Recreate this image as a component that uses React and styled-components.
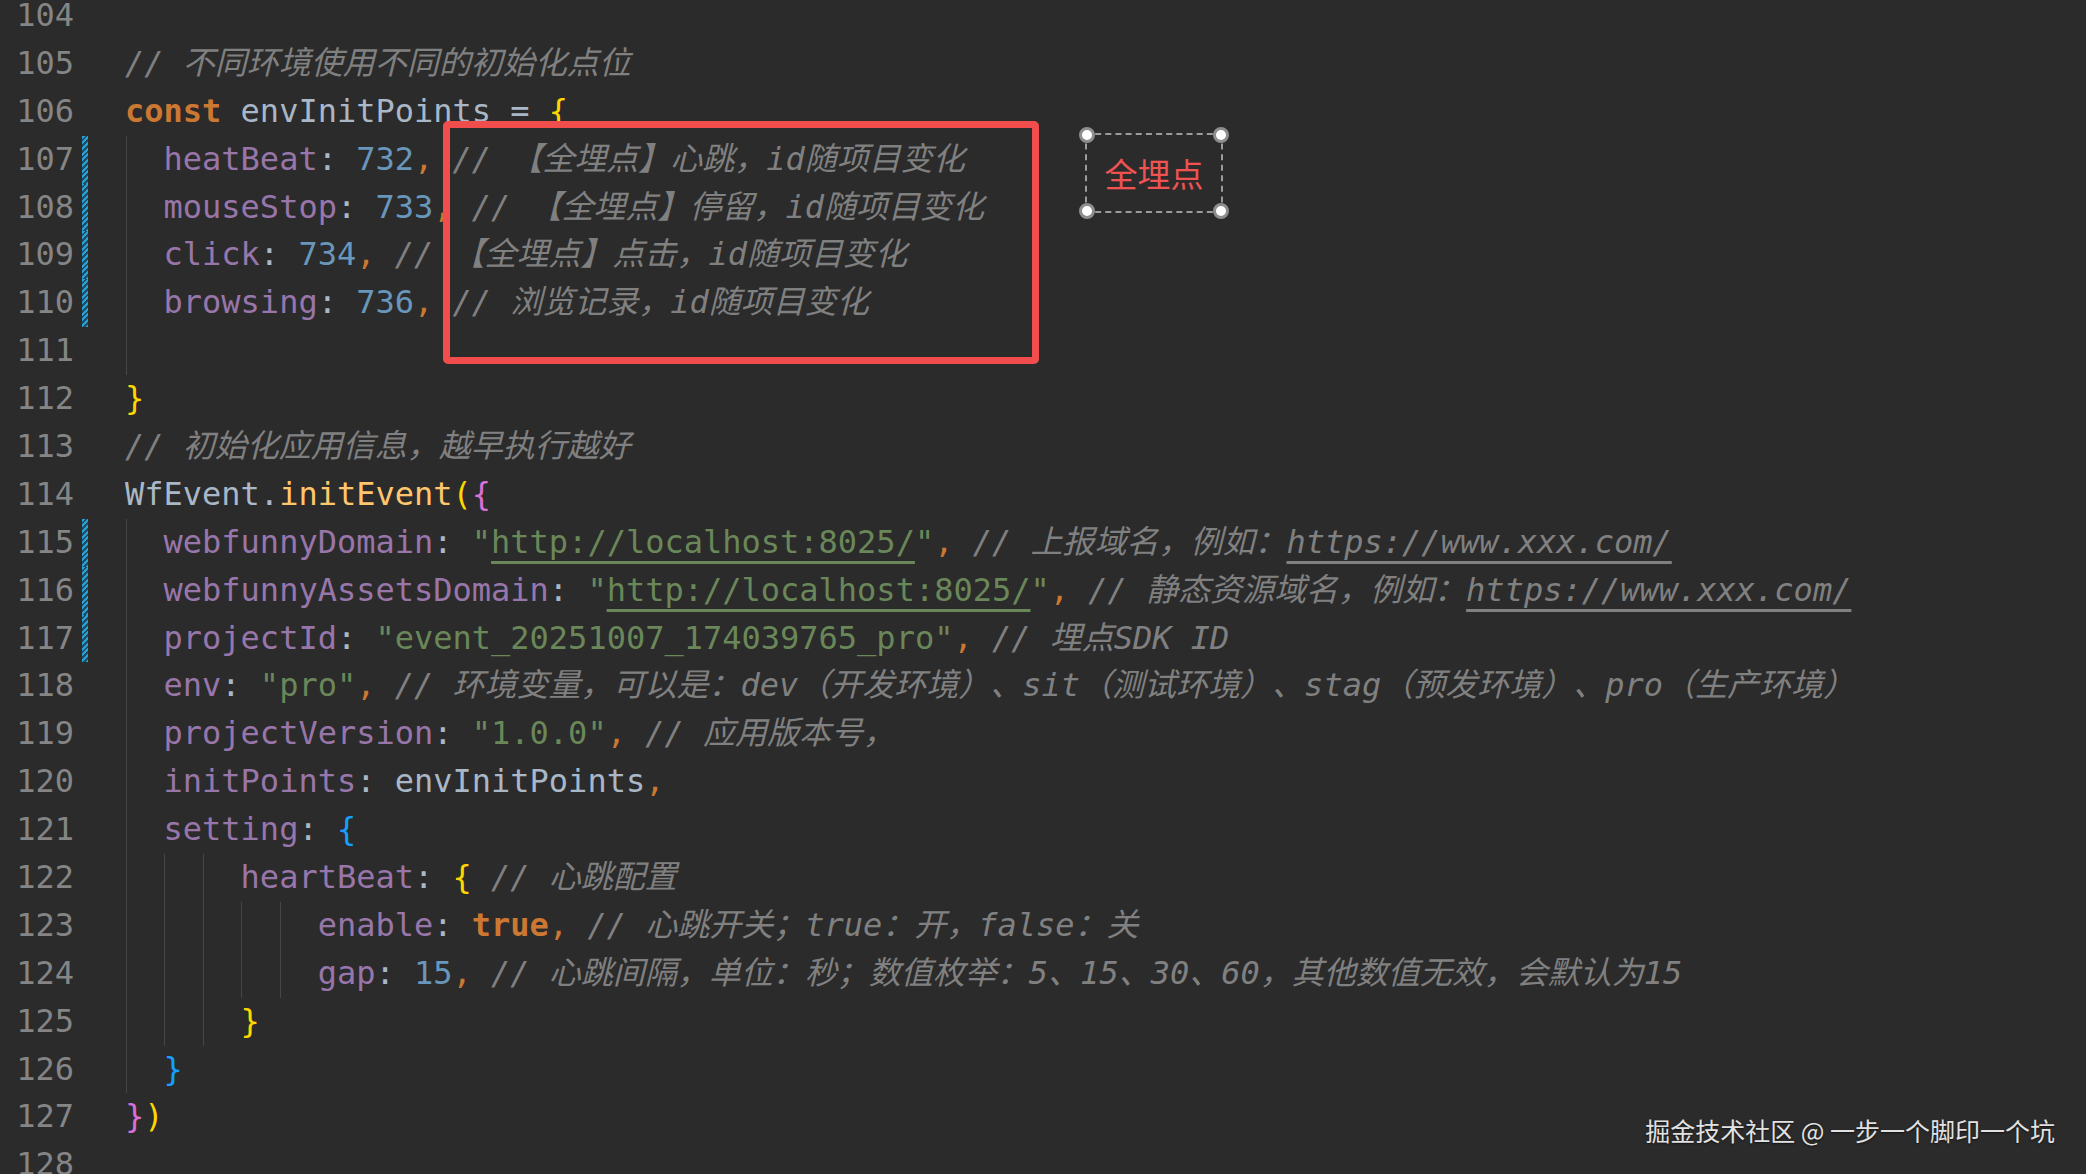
import React from 'react';
import styled, { createGlobalStyle } from 'styled-components';

const CH = 19.2;

const GlobalStyle = createGlobalStyle`
	html, body {
		margin: 0;
		padding: 0;
		background: #2b2b2b;
		overflow: hidden;
	}
`;

const colors = {
	kw: '#cc7832',
	id: '#a9b7c6',
	p: '#a9b7c6',
	prop: '#9876aa',
	num: '#6897bb',
	str: '#6a8759',
	com: '#808080',
	punc: '#cc7832',
	fn: '#ffc66d',
	b1: '#ffd700',
	b2: '#da70d6',
	b3: '#179fff',
};

const Page = styled.div`
	position: relative;
	width: 2086px;
	height: 100vh;
	overflow: hidden;
	font-family: 'DejaVu Sans Mono', 'Noto Sans CJK SC', monospace;
	font-size: 32px;
	text-spacing-trim: space-all;
`;

const Editor = styled.div`
	display: flex;
	flex-direction: column;
	margin-top: -8px;
`;

const Line = styled.div`
	display: flex;
	height: 47.9px;
	line-height: 47.9px;
`;

const LineNo = styled.div`
	width: 74px;
	flex-shrink: 0;
	text-align: right;
	color: #858585;
`;

const ChangeCell = styled.div`
	width: 51px;
	flex-shrink: 0;
	display: flex;
`;

const Marker = styled.span`
	margin-left: 8px;
	width: 6px;
	height: 100%;
	background: ${(p) =>
		p.$on
			? 'repeating-linear-gradient(-45deg, #2a9fd6 0 2px, #1d4d63 2px 4px)'
			: 'transparent'};
`;

const Code = styled.div`
	flex: 1;
	white-space: pre;
	background-image: ${(p) =>
		p.$guides.length
			? p.$guides.map(() => 'linear-gradient(#464646, #464646)').join(', ')
			: 'none'};
	background-position: ${(p) =>
		p.$guides.length ? p.$guides.map((c) => `${c * CH + 1}px 0`).join(', ') : '0 0'};
	background-size: 1px 100%;
	background-repeat: no-repeat;
`;

const Tok = styled.span`
	color: ${(p) => colors[p.$k] || '#a9b7c6'};
	font-weight: ${(p) => (p.$k === 'kw' ? 700 : 400)};
	font-style: ${(p) => (p.$k === 'com' ? 'italic' : 'normal')};
	text-decoration: ${(p) => (p.$u ? 'underline' : 'none')};
	text-decoration-thickness: 3px;
	text-underline-offset: 8px;
`;

// annotations drawn over the code screenshot
const RedBox = styled.div`
	position: absolute;
	left: 443px;
	top: 121px;
	width: 596px;
	height: 243px;
	box-sizing: border-box;
	border: 7px solid #f24d4d;
	border-radius: 5px;
`;

const Tag = styled.div`
	position: absolute;
	left: 1085px;
	top: 133px;
	width: 138px;
	height: 80px;
	box-sizing: border-box;
	border: 2px dashed #9c9c9c;
	display: flex;
	align-items: center;
	justify-content: center;
	font-family: 'Noto Sans CJK SC', sans-serif;
	font-size: 33px;
	color: #f05252;
`;

const Handle = styled.span`
	position: absolute;
	width: 16px;
	height: 16px;
	box-sizing: border-box;
	border-radius: 50%;
	background: #ffffff;
	border: 3px solid #8e8e8e;
	left: ${(p) => (p.$right ? '100%' : '0')};
	top: ${(p) => (p.$bottom ? '100%' : '0')};
	transform: translate(-50%, -50%);
`;

const Watermark = styled.div`
	position: absolute;
	right: 31px;
	bottom: 29px;
	font-family: 'Noto Sans CJK SC', sans-serif;
	font-size: 25px;
	line-height: 30px;
	color: #e2e2e2;
	text-shadow: 0 1px 2px rgba(0, 0, 0, 0.6);
`;

const lines = [
	{ n: 104, t: [] },
	{ n: 105, t: [['com', '// 不同环境使用不同的初始化点位']] },
	{ n: 106, t: [['kw', 'const'], ['id', ' envInitPoints = '], ['b1', '{']] },
	{
		n: 107, mark: true, g: [0],
		t: [['id', '  '], ['prop', 'heatBeat'], ['p', ': '], ['num', '732'], ['punc', ','], ['id', ' '], ['com', '// 【全埋点】心跳，id随项目变化']],
	},
	{
		n: 108, mark: true, g: [0],
		t: [['id', '  '], ['prop', 'mouseStop'], ['p', ': '], ['num', '733'], ['punc', ','], ['id', ' '], ['com', '// 【全埋点】停留，id随项目变化']],
	},
	{
		n: 109, mark: true, g: [0],
		t: [['id', '  '], ['prop', 'click'], ['p', ': '], ['num', '734'], ['punc', ','], ['id', ' '], ['com', '// 【全埋点】点击，id随项目变化']],
	},
	{
		n: 110, mark: true, g: [0],
		t: [['id', '  '], ['prop', 'browsing'], ['p', ': '], ['num', '736'], ['punc', ','], ['id', ' '], ['com', '// 浏览记录，id随项目变化']],
	},
	{ n: 111, g: [0], t: [] },
	{ n: 112, t: [['b1', '}']] },
	{ n: 113, t: [['com', '// 初始化应用信息，越早执行越好']] },
	{ n: 114, t: [['id', 'WfEvent'], ['p', '.'], ['fn', 'initEvent'], ['b1', '('], ['b2', '{']] },
	{
		n: 115, mark: true, g: [0],
		t: [
			['id', '  '], ['prop', 'webfunnyDomain'], ['p', ': '], ['str', '"'], ['str', 'http://localhost:8025/', true], ['str', '"'],
			['punc', ','], ['id', ' '], ['com', '// 上报域名，例如：'], ['com', 'https://www.xxx.com/', true],
		],
	},
	{
		n: 116, mark: true, g: [0],
		t: [
			['id', '  '], ['prop', 'webfunnyAssetsDomain'], ['p', ': '], ['str', '"'], ['str', 'http://localhost:8025/', true], ['str', '"'],
			['punc', ','], ['id', ' '], ['com', '// 静态资源域名，例如：'], ['com', 'https://www.xxx.com/', true],
		],
	},
	{
		n: 117, mark: true, g: [0],
		t: [['id', '  '], ['prop', 'projectId'], ['p', ': '], ['str', '"event_20251007_174039765_pro"'], ['punc', ','], ['id', ' '], ['com', '// 埋点SDK ID']],
	},
	{
		n: 118, g: [0],
		t: [
			['id', '  '], ['prop', 'env'], ['p', ': '], ['str', '"pro"'], ['punc', ','], ['id', ' '],
			['com', '// 环境变量，可以是：dev（开发环境）、sit（测试环境）、stag（预发环境）、pro（生产环境）'],
		],
	},
	{
		n: 119, g: [0],
		t: [['id', '  '], ['prop', 'projectVersion'], ['p', ': '], ['str', '"1.0.0"'], ['punc', ','], ['id', ' '], ['com', '// 应用版本号，']],
	},
	{ n: 120, g: [0], t: [['id', '  '], ['prop', 'initPoints'], ['p', ': '], ['id', 'envInitPoints'], ['punc', ',']] },
	{ n: 121, g: [0], t: [['id', '  '], ['prop', 'setting'], ['p', ': '], ['b3', '{']] },
	{
		n: 122, g: [0, 2, 4],
		t: [['id', '      '], ['prop', 'heartBeat'], ['p', ': '], ['b1', '{'], ['id', ' '], ['com', '// 心跳配置']],
	},
	{
		n: 123, g: [0, 2, 4, 6, 8],
		t: [['id', '          '], ['prop', 'enable'], ['p', ': '], ['kw', 'true'], ['punc', ','], ['id', ' '], ['com', '// 心跳开关；true：开，false：关']],
	},
	{
		n: 124, g: [0, 2, 4, 6, 8],
		t: [
			['id', '          '], ['prop', 'gap'], ['p', ': '], ['num', '15'], ['punc', ','], ['id', ' '],
			['com', '// 心跳间隔，单位：秒；数值枚举：5、15、30、60，其他数值无效，会默认为15'],
		],
	},
	{ n: 125, g: [0, 2, 4], t: [['id', '      '], ['b1', '}']] },
	{ n: 126, g: [0], t: [['id', '  '], ['b3', '}']] },
	{ n: 127, t: [['b2', '}'], ['b1', ')']] },
	{ n: 128, t: [] },
];

const App = () => {
	return (
		<>
			<GlobalStyle />
			<Page>
				<Editor>
					{lines.map((line) => (
						<Line key={line.n}>
							<LineNo>{line.n}</LineNo>
							<ChangeCell>
								<Marker $on={line.mark} />
							</ChangeCell>
							<Code $guides={line.g || []}>
								{line.t.map(([k, text, u], i) => (
									<Tok key={i} $k={k} $u={u}>
										{text}
									</Tok>
								))}
							</Code>
						</Line>
					))}
				</Editor>

				<RedBox />
				<Tag>
					全埋点
					<Handle />
					<Handle $right />
					<Handle $bottom />
					<Handle $right $bottom />
				</Tag>
				<Watermark>掘金技术社区 @ 一步一个脚印一个坑</Watermark>
			</Page>
		</>
	);
};

export default App;
